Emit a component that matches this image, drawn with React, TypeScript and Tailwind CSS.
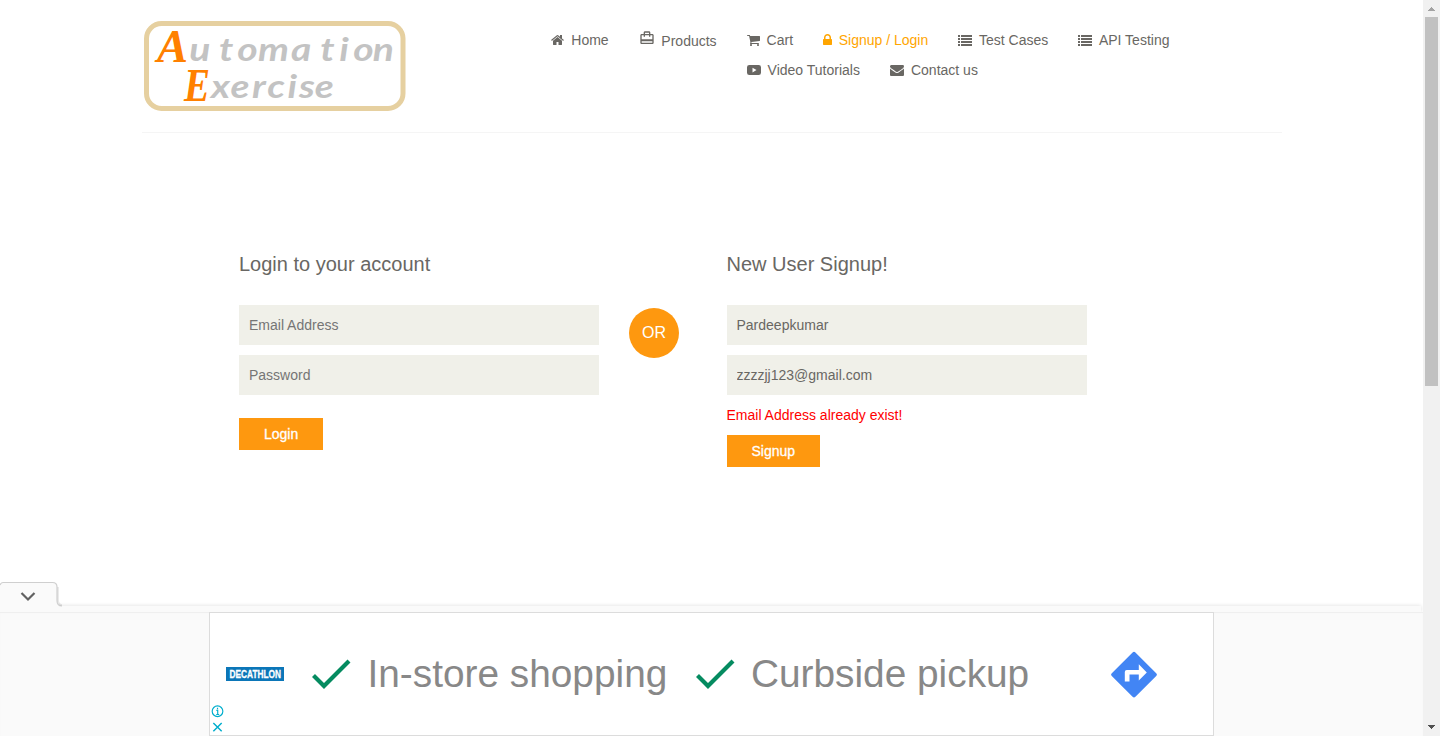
import type { ReactNode } from "react";
import { MdCardTravel } from "react-icons/md";

const PATHS = {
  home: "M1472 992v480q0 26-19 45t-45 19h-384v-384h-256v384h-384q-26 0-45-19t-19-45v-480q0-1 .5-3t.5-3l575-474 575 474q1 2 1 6zm223-69l-62 74q-8 9-21 11h-3q-13 0-21-7l-692-577-692 577q-12 8-24 7-13-2-21-11l-62-74q-8-10-7-23.5t11-21.5l719-599q32-26 76-26t76 26l244 204v-195q0-14 9-23t23-9h192q14 0 23 9t9 23v408l219 182q10 8 11 21.5t-7 23.5z",
  cart: "M704 1536q0 52-38 90t-90 38-90-38-38-90 38-90 90-38 90 38 38 90zm896 0q0 52-38 90t-90 38-90-38-38-90 38-90 90-38 90 38 38 90zm128-1088v512q0 24-16.5 42.5t-40.5 21.5l-1044 122q13 60 13 70 0 16-24 64h920q26 0 45 19t19 45-19 45-45 19h-1024q-26 0-45-19t-19-45q0-11 8-31.5t16-36 21.5-40 15.5-29.5l-177-823h-204q-26 0-45-19t-19-45 19-45 45-19h256q16 0 28.5 6.5t19.5 15.5 13 24.5 8 26 5.5 29.5 4.5 26h1201q26 0 45 19t19 45z",
  lock: "M640 768h512v-192q0-106-75-181t-181-75-181 75-75 181v192zm832 96v576q0 40-28 68t-68 28h-960q-40 0-68-28t-28-68v-576q0-40 28-68t68-28h32v-192q0-184 132-316t316-132 316 132 132 316v192h32q40 0 68 28t28 68z",
  list: "M0 256h256v256H0zM384 256h1408v256H384zM0 640h256v256H0zM384 640h1408v256H384zM0 1024h256v256H0zM384 1024h1408v256H384zM0 1408h256v256H0zM384 1408h1408v256H384z",
  video: "M300 256h1192q300 0 300 300v680q0 300-300 300H300q-300 0-300-300V556q0-300 300-300zM704 600v600l512-300z",
  mail: "M1792 710v794q0 66-47 113t-113 47h-1472q-66 0-113-47t-47-113v-794q44 49 101 87 362 246 497 345 57 42 92.5 65.5t94.5 48 110 24.5h2q51 0 110-24.5t94.5-48 92.5-65.5q170-123 498-345 57-39 100-87zm0-294q0 79-49 151t-122 123q-376 261-468 325-10 7-42.5 31t-54 38.5-52 32.5-57.5 27-50 9h-2q-23 0-50-9t-57.5-27-52-32.5-54-38.5-42.5-31q-91-64-262-182.5t-205-142.5q-62-42-117-115.5t-55-136.5q0-78 41.5-130t118.5-52h1472q65 0 112.5 47t47.5 113z",
};

const VIEW = {
  home: "64 0 1664 1792",
  cart: "64 0 1664 1792",
  lock: "320 0 1152 1792",
  list: "0 0 1792 1792",
  video: "0 0 1792 1792",
  mail: "0 0 1792 1792",
};

function Glyph({ name }: { name: keyof typeof PATHS }) {
  return (
    <svg viewBox={VIEW[name]} className="h-3.5 w-auto shrink-0" fill="currentColor" fillRule="evenodd" aria-hidden="true">
      <path d={PATHS[name]} />
    </svg>
  );
}

function NavItem({ icon, label, active = false }: { icon: keyof typeof PATHS; label: string; active?: boolean }) {
  return (
    <a href="#" className={active ? "flex h-5 items-center gap-[7px] text-[#ffa500]" : "flex h-5 items-center gap-[7px]"}>
      <Glyph name={icon} />
      <span>{label}</span>
    </a>
  );
}

// The grey letters are set one by one in a horizontally stretched coordinate system.
function Logo() {
  return (
    <svg width="262" height="90" viewBox="144 21 262 90" className="shrink-0 overflow-visible" aria-label="Automation Exercise">
      <rect x="146.500" y="23.500" width="256.500" height="85" rx="15" fill="#fff" stroke="#e6d0a0" strokeWidth="5" />
      <g fontStyle="italic" fontWeight="700">
        <text x="157" y="61.500" fontFamily="Liberation Serif" fontSize="46" fill="#ff8000" textLength="31" lengthAdjust="spacingAndGlyphs">A</text>
        <text x="184" y="101" fontFamily="Liberation Serif" fontSize="46" fill="#ff8000" textLength="26" lengthAdjust="spacingAndGlyphs">E</text>
        <g fontFamily="Lato" fontSize="32" fill="#c3c3c3" transform="translate(144 0) scale(1.22 1)">
          <text x="37.200 61.500 76.500 93.500 120.500 144.500 160 171.500 187.500" y="61.500">utomation</text>
          <text x="55 71 88.500 101 117.700 127 140" y="98.500">xercise</text>
        </g>
      </g>
    </svg>
  );
}

const FIELD = "block h-10 w-full bg-[#f0f0e9] px-2.5 text-[14px] text-[#696763] placeholder:text-[#757575] outline-none";

function SubmitButton({ children }: { children: ReactNode }) {
  return (
    <button type="button" className="flex h-8 items-center bg-[#fe980f] px-[25px] text-[14px] leading-5 text-white [-webkit-text-stroke:0.3px_white]">
      {children}
    </button>
  );
}

function Check() {
  return (
    <svg width="40" height="30" viewBox="0 0 40 30" className="block shrink-0" aria-hidden="true">
      <path d="M2.500 16.500L13 27L38 2" fill="none" stroke="#058b60" strokeWidth="4.200" />
    </svg>
  );
}

function Advert() {
  return (
    <section className="ml-[209px] flex h-[124px] w-[1005px] items-center border border-[#dcdcdc] bg-white">
      <div className="flex h-full w-[74px] flex-col items-start">
        <div className="mt-[54px] ml-4 flex h-[14px] w-[58px] items-center justify-center bg-[#0b76b8]">
          <svg width="52" height="14" viewBox="0 0 52 14" className="overflow-visible">
            <text x="0.500" y="10.900" fontFamily="Liberation Sans" fontSize="11" fontWeight="700" fill="#fff" textLength="51.500" lengthAdjust="spacingAndGlyphs" stroke="#fff" strokeWidth="0.300">DECATHLON</text>
          </svg>
        </div>
        <svg width="14" height="32" viewBox="0 0 14 32" className="mt-[23px] ml-px" fill="none" stroke="#00aecd" aria-hidden="true">
          <circle cx="6.500" cy="7.500" r="5.500" strokeWidth="1.200" />
          <path d="M5.300 6.500H6.700V10.800M5.200 10.800H8.200M6.500 3.900V5.300" strokeWidth="1.200" />
          <path d="M2.200 19.500L10.800 28.100M10.800 19.500L2.200 28.100" strokeWidth="1.500" />
        </svg>
      </div>
      <div className="ml-[27px] flex items-center font-['Liberation_Sans'] text-[38.800px] leading-[46px] text-[#888]">
        <Check />
        <span className="ml-[16.500px] w-[325.500px] whitespace-nowrap">In-store shopping</span>
        <span className="ml-0.5"><Check /></span>
        <span className="ml-[16px] w-[343px] whitespace-nowrap">Curbside pickup</span>
      </div>
      <svg width="48" height="48" viewBox="0 0 48 48" className="ml-[15.500px] shrink-0" aria-hidden="true">
        <rect x="7.300" y="7.900" width="33.400" height="33.400" rx="2" transform="rotate(45 24 24.600)" fill="#4285f4" />
        <path d="M14.800 31.500V22q0-2 2-2h12v-5.800l8 8.200-8 8v-5.800H19.500v6.900z" fill="#fff" />
      </svg>
    </section>
  );
}

function Scrollbar() {
  return (
    <div className="flex h-full w-[17px] shrink-0 flex-col items-center bg-[#f1f1f1]">
      <svg width="17" height="17" viewBox="0 0 17 17" shapeRendering="crispEdges" aria-hidden="true">
        <path d="M8 7h1v1h1v1h1v1h1v1H5v-1h1v-1h1v-1h1z" fill="#a3a3a3" />
      </svg>
      <div className="h-[369px] w-[13px] bg-[#c1c1c1]" />
      <svg width="17" height="17" viewBox="0 0 17 17" className="mt-auto" shapeRendering="crispEdges" aria-hidden="true">
        <path d="M5 6h7v1h-1v1h-1v1H9v1H8V9H7V8H6V7H5z" fill="#505050" />
      </svg>
    </div>
  );
}

export default function App() {
  return (
    <div className="flex h-[736px] w-[1440px] overflow-hidden bg-white font-['Liberation_Sans',Arial,sans-serif] text-[14px] leading-5 text-[#696763]">
      <div className="flex min-w-0 flex-1 flex-col">
        <header className="mx-auto flex h-[133px] w-[1140px] items-start border-b border-[#f5f5f5] pt-[21px] pl-[2.500px]">
          <Logo />
          <nav className="mt-[9px] ml-[145.300px] flex gap-[30px]">
            <NavItem icon="home" label="Home" />
            <a href="#" className="flex h-5 items-center gap-[6.700px]">
              <MdCardTravel size={16} className="-mt-1" />
              <span className="mt-0.5">Products</span>
            </a>
            <div className="flex flex-col gap-2.5">
              <div className="flex gap-[29.700px]">
                <NavItem icon="cart" label="Cart" />
                <NavItem icon="lock" label="Signup / Login" active />
                <NavItem icon="list" label="Test Cases" />
                <NavItem icon="list" label="API Testing" />
              </div>
              <div className="flex gap-[30px]">
                <NavItem icon="video" label="Video Tutorials" />
                <NavItem icon="mail" label="Contact us" />
              </div>
            </div>
          </nav>
        </header>

        <main className="flex flex-1 items-start pt-[120px] pl-[239px]">
          <form className="w-[360px]">
            <h2 className="mb-[30px] text-[20px] leading-[22px]">Login to your account</h2>
            <input className={FIELD} placeholder="Email Address" />
            <input className={FIELD + " mt-2.5 mb-[23px]"} placeholder="Password" />
            <SubmitButton>Login</SubmitButton>
          </form>
          <div className="mt-[55px] ml-[30px] flex size-[50px] items-center justify-center rounded-full bg-[#fe980f] text-base text-white">OR</div>
          <form className="ml-[47.500px] w-[360px]">
            <h2 className="mb-[30px] text-[20px] leading-[22px]">New User Signup!</h2>
            <input className={FIELD} defaultValue="Pardeepkumar" />
            <input className={FIELD + " mt-2.5"} defaultValue="zzzzjj123@gmail.com" />
            <p className="my-2.5 text-[#f00]">Email Address already exist!</p>
            <SubmitButton>Signup</SubmitButton>
          </form>
        </main>

        <svg width="68" height="24" viewBox="0 0 68 24" className="relative z-10 block shrink-0 overflow-visible" aria-hidden="true">
          <path d="M0 3Q1 0.500 3 0.500H52.500Q57 0.500 57 5V18.500Q57 24 62 24.500V26H0z" fill="#fafafa" />
          <path d="M0 3Q1 0.500 3 0.500H52.500Q57 0.500 57 5V18.500Q57 24 62 24" fill="none" stroke="#cfcfcf" strokeWidth="1.200" />
          <path d="M58.200 5V18Q58.200 22.500 62 23" fill="none" stroke="#000" strokeOpacity="0.090" strokeWidth="1.500" />
          <path d="M21.500 11L28 17.500L34.500 11" fill="none" stroke="#616161" strokeWidth="2.200" />
        </svg>
        <div className="h-1.5 w-[1421px] shrink-0 bg-[#fafafa] shadow-[0_0_4px_rgba(0,0,0,0.14)]" />
        <footer className="h-[124px] shrink-0 bg-[#fafafa] shadow-[inset_0_1px_1px_rgba(0,0,0,0.05)]">
          <Advert />
        </footer>
      </div>
      <Scrollbar />
    </div>
  );
}
